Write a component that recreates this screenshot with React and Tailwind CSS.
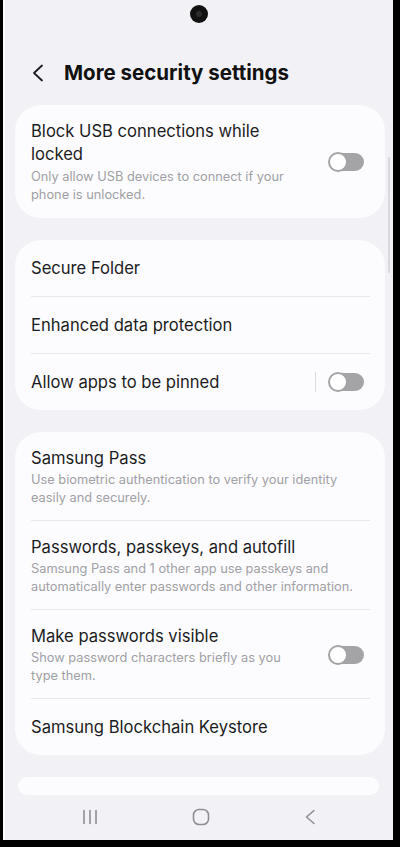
const CARDS = [
  [
    {
      title: "Block USB connections while locked",
      sub: "Only allow USB devices to connect if your phone is unlocked.",
      toggle: true,
      wide: true,
    },
  ],
  [
    { title: "Secure Folder" },
    { title: "Enhanced data protection" },
    { title: "Allow apps to be pinned", toggle: true, bar: true },
  ],
  [
    {
      title: "Samsung Pass",
      sub: "Use biometric authentication to verify your identity easily and securely.",
    },
    {
      title: "Passwords, passkeys, and autofill",
      sub: "Samsung Pass and 1 other app use passkeys and automatically enter passwords and other information.",
    },
    {
      title: "Make passwords visible",
      sub: "Show password characters briefly as you type them.",
      toggle: true,
    },
    { title: "Samsung Blockchain Keystore" },
  ],
];

const Toggle = () => (
  <div className="relative w-[35px] h-[18px] rounded-full bg-[#a4a4a6] shrink-0">
    <div className="absolute left-[-1px] top-[-1px] w-[20px] h-[20px] rounded-full bg-white border-2 border-[#a4a4a6]" />
  </div>
);

const Row = ({ item }) => {
  if (!item.sub) {
    return (
      <div className="h-[56px] flex items-center pl-4 pr-[21px]">
        <span className="flex-1 text-[16.6px] text-[#1c1c1e]">{item.title}</span>
        {item.bar && <div className="w-px h-[20px] bg-[#dcdce0] mr-[13px]" />}
        {item.toggle && <Toggle />}
      </div>
    );
  }
  return (
    <div
      className={`flex items-center justify-between pl-4 pr-[21px] ${
        item.wide ? "pt-[15px] pb-[14px]" : "pt-[15px] pb-[13px]"
      }`}
    >
      <div className={item.toggle ? "w-[265px]" : "flex-1 min-w-0"}>
        <div
          className={`text-[16.6px] text-[#1c1c1e] ${
            item.wide ? "leading-[23px]" : "leading-[22px]"
          }`}
        >
          {item.title}
        </div>
        <div className="mt-[2px] text-[12.8px] leading-[18px] text-[#a0a0a5]">
          {item.sub}
        </div>
      </div>
      {item.toggle && <Toggle />}
    </div>
  );
};

export default function App() {
  return (
    <div
      className="w-[400px] h-[847px] bg-black pl-[3px] pr-[7px] pb-[7px]"
      style={{ fontFamily: "Inter, Roboto, sans-serif" }}
    >
      <div className="relative h-[840px] bg-[#f2f2f6] border-l-2 border-[#fbfbfd] flex flex-col overflow-hidden">
        {/* camera cutout */}
        <div className="h-[42px] flex justify-center">
          <div className="mt-[5px] w-[18px] h-[18px] rounded-full bg-[#111] flex items-center justify-center">
            <div className="w-[6px] h-[6px] rounded-full bg-[#2c2c30]" />
          </div>
        </div>

        {/* header */}
        <div className="h-[62px] flex items-center pl-[26px]">
          <svg width="14" height="18" viewBox="0 0 14 18" fill="none">
            <path d="M11 1.5 L3 9 L11 16.5" stroke="#1c1c1e" strokeWidth="1.8" strokeLinecap="round" strokeLinejoin="round" />
          </svg>
          <h1 className="ml-[19px] text-[20.5px] font-bold text-[#111]">
            More security settings
          </h1>
        </div>

        {/* list */}
        <div className="flex-1 overflow-hidden pt-px pl-[10px] pr-[8px] flex flex-col gap-[22px]">
          {CARDS.map((rows, ci) => (
            <div key={ci} className="bg-[#fcfcfe] rounded-[26px] shrink-0">
              {rows.map((item, ri) => (
                <div key={item.title}>
                  {ri > 0 && <div className="h-px bg-[#e8e8ec] ml-4 mr-[15px]" />}
                  <Row item={item} />
                </div>
              ))}
            </div>
          ))}
          <div className="h-[18px] ml-[3px] mr-[6px] rounded-full bg-[#fcfcfe] shrink-0" />
        </div>

        {/* nav bar */}
        <div className="h-[45px] flex items-center justify-between pl-[76px] pr-[76px] pb-[2px]">
          <svg width="18" height="16" viewBox="0 0 18 16" fill="none">
            <path d="M3 1.5 V14.5 M9 1.5 V14.5 M15 1.5 V14.5" stroke="#8e8e93" strokeWidth="1.6" strokeLinecap="round" />
          </svg>
          <svg width="18" height="18" viewBox="0 0 18 18" fill="none">
            <rect x="1.5" y="1.5" width="15" height="15" rx="5.5" stroke="#8e8e93" strokeWidth="1.6" />
          </svg>
          <svg width="14" height="16" viewBox="0 0 14 16" fill="none">
            <path d="M11 1.5 L3.5 8 L11 14.5" stroke="#8e8e93" strokeWidth="1.6" strokeLinecap="round" strokeLinejoin="round" />
          </svg>
        </div>

        {/* scrollbar */}
        <div className="absolute right-[3px] top-[157px] w-[2px] h-[116px] rounded-full bg-[#dadade]" />
      </div>
    </div>
  );
}
